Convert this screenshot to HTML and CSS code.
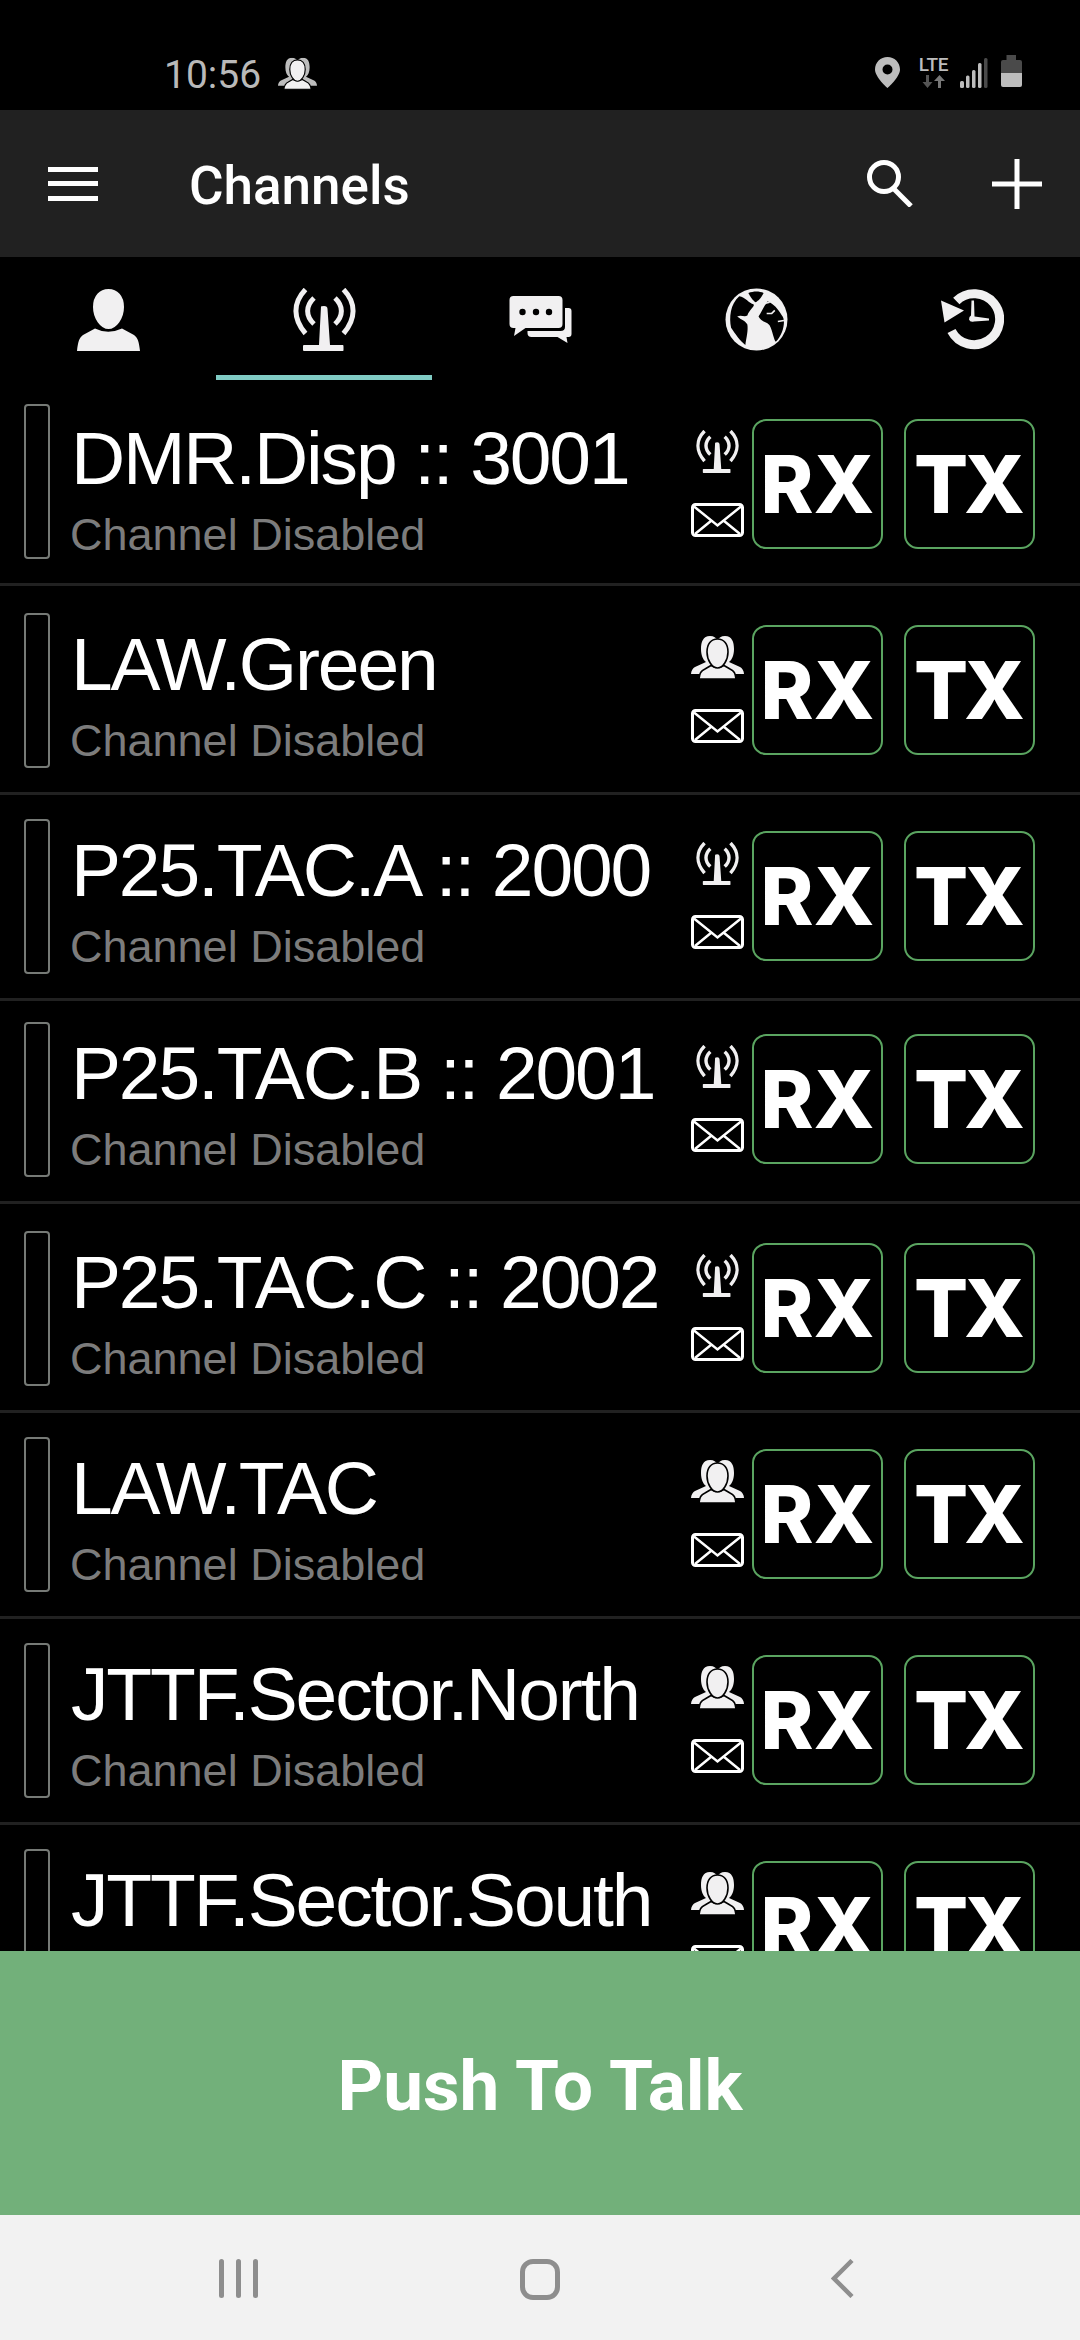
FILE: index.html
```html
<!DOCTYPE html>
<html lang="en">
<head>
<meta charset="utf-8">
<title>Channels</title>
<link rel="stylesheet" href="styles.css">
</head>
<body>
<svg class="defs" xmlns="http://www.w3.org/2000/svg">
  <symbol id="person" viewBox="0 0 63 63">
    <path d="M0 63C1 54 2 50 6 47L18 40.5Q31 47 45 40.5L57 47C61 50 62 54 63 63Z"/>
    <path class="cut" d="M31.5 0C22 0 15 7 15 19C15 31 23 42 31.5 42C40 42 48 31 48 19C48 7 41 0 31.5 0Z"/>
  </symbol>
  <symbol id="antenna" viewBox="0 0 63 63" preserveAspectRatio="none">
    <path d="M28 18.5Q28 18 31 18Q34.500 18 34.500 21L37 57H50Q50.500 57 50.500 59V62Q50.500 63 50 63H11Q10 63 10 62V58Q10 57 11 57H26Z"/>
    <g class="wave">
      <path d="M12.500 1.500C-0.500 15 0 31 12.500 45.500"/>
      <path d="M50.500 1.500C63.500 15 63 31 50.500 45.500"/>
      <path d="M21 10C12.500 18 12.500 28 21 36"/>
      <path d="M42 10C50.500 18 50.500 28 42 36"/>
    </g>
  </symbol>
  <symbol id="group" viewBox="0 0 53 43">
    <path d="M19 0C12 0 10 6 10 13C10 19 12 24 15 26L4 31C2 32 0 35 0 38H12L26 30L40 38H53C53 35 51 32 49 31L38 26C41 24 43 19 43 13C43 6 41 0 34 0C30 0 28 2 26.500 4C25 2 23 0 19 0Z"/>
    <path class="cut-thin" d="M8 43C8.500 37 10 35 14 33L20 29.500Q26.500 33 33 29.500L39 33C43 35 44.500 37 45 43Z"/>
    <path class="cut-thin" d="M26.500 3C20 3 16 8 16 16C16 24 21 32 26.500 32C32 32 37 24 37 16C37 8 33 3 26.500 3Z"/>
  </symbol>
  <symbol id="mail" viewBox="0 0 53 34" preserveAspectRatio="none">
    <rect class="mail-box" x="1.500" y="1.500" width="50" height="31" rx="3"/>
    <path class="mail-line" d="M3 3.500L26.500 22.500L50 3.500M4 31L20.500 17.500M49 31L32.500 17.500"/>
  </symbol>
</svg>

<div class="screen">
  <div class="status">
    <span class="time">10:56</span>
    <svg class="st-group" viewBox="0 0 53 43"><use href="#group"/></svg>
    <div class="st-right">
      <svg class="pin" viewBox="0 0 25 31"><path fill-rule="evenodd" d="M12.500 0C5.600 0 0 5.500 0 12.400C0 20 12.500 31 12.500 31S25 20 25 12.400C25 5.500 19.400 0 12.500 0ZM12.500 7.500A5 5 0 1 1 12.500 17.500A5 5 0 1 1 12.500 7.500Z"/></svg>
      <div class="lte">
        <span class="lte-text">LTE</span>
        <svg class="lte-arrows" viewBox="0 0 24 13"><path class="dn" d="M4 0H7V7H10.500L5.500 13L0.500 7H4Z"/><path class="up" d="M16 13H19V6H23L17.500 0L12 6H16Z"/></svg>
      </div>
      <svg class="signal" viewBox="0 0 28 30">
        <rect class="lit" x="0" y="23" width="4" height="7" rx="1.500"/>
        <rect class="lit" x="6" y="17.500" width="3.500" height="12.500" rx="1.500"/>
        <rect class="lit" x="12" y="12" width="3.500" height="18" rx="1.500"/>
        <rect class="lit" x="18" y="5" width="3.500" height="25" rx="1.500"/>
        <rect class="dim" x="24" y="0" width="3.500" height="30" rx="1.500"/>
      </svg>
      <svg class="battery" viewBox="0 0 21 32">
        <path class="dim" d="M5.500 0H15V5H19Q21 5 21 7V18H0V7Q0 5 2 5H5.500Z"/>
        <path class="lit" d="M0 18H21V30Q21 32 19 32H2Q0 32 0 30Z"/>
      </svg>
    </div>
  </div>

  <header class="appbar">
    <div class="menu"><i></i><i></i><i></i></div>
    <h1 class="appbar-title">Channels</h1>
    <svg class="search" viewBox="0 0 47 47"><circle cx="17" cy="17" r="14.500"/><path d="M26 28L44 46"/></svg>
    <svg class="plus" viewBox="0 0 50 50"><path d="M25 0V50M0 25H50"/></svg>
  </header>

  <nav class="tabs">
    <div class="tab"><svg class="tab-icon" viewBox="0 0 63 63"><use href="#person"/></svg></div>
    <div class="tab tab-on"><svg class="tab-icon" viewBox="0 0 63 63"><use href="#antenna"/></svg></div>
    <div class="tab"><svg class="tab-icon" viewBox="0 0 62 63"><path d="M4 8H49Q53 8 53 12V36Q53 40 49 40H16L4.500 48L6 40H4Q0 40 0 36V12Q0 8 4 8Z"/><path d="M55.500 20H59Q62 20 62 23V46Q62 49 59 49H57L58 55L48 49H22Q18 49 18 45V43H51Q55.500 43 55.500 39Z"/><g class="dots"><circle cx="13" cy="24" r="3.200"/><circle cx="26.500" cy="24" r="3.200"/><circle cx="39.500" cy="24" r="3.200"/></g></svg></div>
    <div class="tab"><svg class="tab-icon" viewBox="0 0 62 60"><circle cx="31" cy="30" r="30.500"/><g class="dots"><path d="M14 7C20 8 24 14 28 15C30 17 24 20 22 26C19 28 16 25 12 27C17 31 20 31 22 35C23 41 21 48 20 55C15 51 10 44 6 38C4 28 5 15 14 7Z"/><path d="M23 4C28 2 34 2 38 4C36 8 33 12 30 13C28 12 25 8 23 4Z"/><path d="M42 12C48 15 52 19 56 26C60 30 58 44 50 52C48 50 47 42 44 36C42 32 36 33 33 27C37 21 38 17 42 12Z"/></g><path class="coast" d="M41 24L46 24L49 21M36 16L40 14L44 13M52 32L58 31"/></svg></div>
    <div class="tab"><svg class="tab-icon" viewBox="0 0 63 60"><path class="clock-ring" d="M15.300 11.500A25.500 25.500 0 1 1 10.500 41.500"/><path d="M0 11L3.500 33L23 21Z"/><path d="M30.500 11H33L33.500 27L48 29V31L33 32Q29 33 28 30Q28 27 30 26Z"/></svg></div>
    <div class="tab-line"></div>
  </nav>

  <main class="list">
    <div class="row first">
      <div class="bar"></div>
      <div class="info"><div class="name">DMR.Disp :: 3001</div><div class="sub">Channel Disabled</div></div>
      <div class="actions">
        <div class="stack"><svg class="kind" viewBox="0 0 63 63"><use href="#antenna"/></svg><svg class="mail" viewBox="0 0 53 34"><use href="#mail"/></svg></div>
        <div class="toggle">RX</div><div class="toggle">TX</div>
      </div>
    </div>
    <div class="row tall">
      <div class="bar"></div>
      <div class="info"><div class="name">LAW.Green</div><div class="sub">Channel Disabled</div></div>
      <div class="actions">
        <div class="stack"><svg class="kind" viewBox="0 0 53 43"><use href="#group"/></svg><svg class="mail" viewBox="0 0 53 34"><use href="#mail"/></svg></div>
        <div class="toggle">RX</div><div class="toggle">TX</div>
      </div>
    </div>
    <div class="row">
      <div class="bar"></div>
      <div class="info"><div class="name">P25.TAC.A :: 2000</div><div class="sub">Channel Disabled</div></div>
      <div class="actions">
        <div class="stack"><svg class="kind" viewBox="0 0 63 63"><use href="#antenna"/></svg><svg class="mail" viewBox="0 0 53 34"><use href="#mail"/></svg></div>
        <div class="toggle">RX</div><div class="toggle">TX</div>
      </div>
    </div>
    <div class="row short">
      <div class="bar"></div>
      <div class="info"><div class="name">P25.TAC.B :: 2001</div><div class="sub">Channel Disabled</div></div>
      <div class="actions">
        <div class="stack"><svg class="kind" viewBox="0 0 63 63"><use href="#antenna"/></svg><svg class="mail" viewBox="0 0 53 34"><use href="#mail"/></svg></div>
        <div class="toggle">RX</div><div class="toggle">TX</div>
      </div>
    </div>
    <div class="row tall">
      <div class="bar"></div>
      <div class="info"><div class="name">P25.TAC.C :: 2002</div><div class="sub">Channel Disabled</div></div>
      <div class="actions">
        <div class="stack"><svg class="kind" viewBox="0 0 63 63"><use href="#antenna"/></svg><svg class="mail" viewBox="0 0 53 34"><use href="#mail"/></svg></div>
        <div class="toggle">RX</div><div class="toggle">TX</div>
      </div>
    </div>
    <div class="row">
      <div class="bar"></div>
      <div class="info"><div class="name">LAW.TAC</div><div class="sub">Channel Disabled</div></div>
      <div class="actions">
        <div class="stack"><svg class="kind" viewBox="0 0 53 43"><use href="#group"/></svg><svg class="mail" viewBox="0 0 53 34"><use href="#mail"/></svg></div>
        <div class="toggle">RX</div><div class="toggle">TX</div>
      </div>
    </div>
    <div class="row">
      <div class="bar"></div>
      <div class="info"><div class="name">JTTF.Sector.North</div><div class="sub">Channel Disabled</div></div>
      <div class="actions">
        <div class="stack"><svg class="kind" viewBox="0 0 53 43"><use href="#group"/></svg><svg class="mail" viewBox="0 0 53 34"><use href="#mail"/></svg></div>
        <div class="toggle">RX</div><div class="toggle">TX</div>
      </div>
    </div>
    <div class="row">
      <div class="bar"></div>
      <div class="info"><div class="name">JTTF.Sector.South</div><div class="sub">Channel Disabled</div></div>
      <div class="actions">
        <div class="stack"><svg class="kind" viewBox="0 0 53 43"><use href="#group"/></svg><svg class="mail" viewBox="0 0 53 34"><use href="#mail"/></svg></div>
        <div class="toggle">RX</div><div class="toggle">TX</div>
      </div>
    </div>
  </main>

  <div class="ptt">Push To Talk</div>

  <div class="navbar">
    <div class="recents"><i></i><i></i><i></i></div>
    <div class="home"></div>
    <svg class="back" viewBox="0 0 23 39"><path d="M21 1.500L3 19.500L21 37.500"/></svg>
  </div>
</div>
</body>
</html>
```

FILE: styles.css
```css
* { box-sizing: border-box; }
html, body { margin: 0; padding: 0; background: #000; }
.defs { display: none; }

.screen {
  width: 1080px;
  height: 2340px;
  display: flex;
  flex-direction: column;
  background: #000;
  overflow: hidden;
  font-family: "Liberation Sans", Arial, sans-serif;
}

/* status bar */
.status {
  flex: 0 0 110px;
  display: flex;
  align-items: flex-start;
  padding: 55px 58px 0 164px;
  fill: #bdbdbd;
}
.time {
  font: 400 39px/40px Roboto, sans-serif;
  color: #b9b9b9;
  width: 92px;
}
.st-group { width: 39px; height: 33px; margin: 2px 0 0 22px; }
.st-group .cut-thin { stroke: #000; }
.st-right { margin-left: auto; display: flex; align-items: flex-start; }
.pin { width: 25px; height: 31px; margin-top: 2px; }
.lte { width: 31px; margin-left: 18px; margin-top: 1px; display: flex; flex-direction: column; align-items: center; }
.lte-text { font: 500 19px/17px Roboto, sans-serif; color: #bdbdbd; letter-spacing: -0.3px; }
.lte-arrows { width: 24px; height: 13px; margin-top: 2px; }
.dn { fill: #555; }
.up { fill: #777; }
.signal { width: 28px; height: 30px; margin: 3px 0 0 11px; }
.battery { width: 21px; height: 32px; margin: 0 0 0 13px; }
.lit { fill: #bdbdbd; }
.dim { fill: #4a4a4a; }

/* app bar */
.appbar {
  flex: 0 0 147px;
  background: #212121;
  display: flex;
  align-items: center;
  padding-left: 48px;
}
.menu { width: 50px; display: flex; flex-direction: column; gap: 9.500px; }
.menu i { display: block; height: 5px; background: #fff; }
.appbar-title {
  margin: 5px 0 0 91px;
  font: 500 53px/60px Roboto, sans-serif;
  color: #fff;
  flex: 1;
}
.search { width: 47px; height: 47px; fill: none; stroke: #fff; stroke-width: 5; margin-right: 78px; }
.plus { width: 50px; height: 50px; fill: none; stroke: #fff; stroke-width: 5; margin-right: 38px; }

/* tabs */
.tabs {
  flex: 0 0 123px;
  display: grid;
  grid-template-columns: repeat(5, 216px);
  grid-template-rows: 118px 5px;
  fill: #f1f0f1;
}
.tab { display: flex; justify-content: center; padding-top: 31px; }
.tab-icon { width: 63px; height: 63px; }
.tab-line { grid-row: 2; grid-column: 2; background: #80cbc4; }
.cut { stroke: #000; stroke-width: 2; fill: #f1f0f1; }
.cut-thin { stroke: #000; stroke-width: 1.600; fill: #f1f0f1; }
.wave path { fill: none; stroke: #f1f0f1; stroke-width: 5; }
.dots { fill: #000; }
.coast { fill: none; stroke: #f1f0f1; stroke-width: 1.500; }
.clock-ring { fill: none; stroke: #f1f0f1; stroke-width: 9; }

/* list */
.list { flex: 1 1 0; min-height: 0; overflow: hidden; }
.row {
  display: flex;
  align-items: flex-start;
  padding: 24px 0 24px 24px;
  border-bottom: 3px solid #212121;
  fill: #f1f0f1;
}
.row.tall { padding-top: 27px; }
.row.short { padding-top: 21px; }
.bar {
  flex: 0 0 26px;
  height: 155px;
  border: 2px solid #767a76;
  border-radius: 4px;
}
.info { flex: 1; min-width: 0; height: 155px; margin-left: 20px; padding-top: 11px; white-space: nowrap; }
.name { font-size: 75px; line-height: 80px; letter-spacing: -2.150px; margin-left: 1px; color: #fff; }
.sub { font-size: 45px; line-height: 56px; color: #7c7c7c; margin-top: 9px; }
.first .info { padding-top: 14px; }
.actions { display: flex; align-items: flex-start; margin-top: 12px; padding-right: 45px; }
.first .actions { margin-top: 15px; }
.stack { width: 53px; margin-right: 8px; padding-top: 11px; display: flex; flex-direction: column; align-items: center; }
.kind { width: 53px; height: 43px; }
.mail { width: 53px; height: 34px; margin-top: 30px; }
.mail-box { fill: none; stroke: #fff; stroke-width: 3; }
.mail-line { fill: none; stroke: #fff; stroke-width: 2.500; }
.toggle {
  width: 131px;
  height: 130px;
  border: 2.500px solid #5aa460;
  border-radius: 14px;
  display: flex;
  align-items: center;
  justify-content: center;
  font: 800 80px/1 Inter, sans-serif;
  color: #fff;
}
.toggle + .toggle { margin-left: 21px; letter-spacing: -4px; padding-right: 4px; }

/* push to talk */
.ptt {
  flex: 0 0 264px;
  background: #72b07a;
  color: #fff;
  display: flex;
  align-items: center;
  justify-content: center;
  padding-top: 5px;
  font: 700 71px/1 Roboto, sans-serif;
}

/* nav bar */
.navbar {
  flex: 0 0 125px;
  background: #f2f2f2;
  display: flex;
  align-items: flex-start;
  padding: 44px 0 0 219px;
}
.recents { width: 39px; height: 39px; display: flex; justify-content: space-between; }
.recents i { display: block; width: 5px; background: #8e8e8e; border-radius: 2.500px; }
.home { width: 40px; height: 41px; margin-left: 262px; border: 5px solid #8e8e8e; border-radius: 13px; }
.back { width: 23px; height: 39px; margin-left: 271px; fill: none; stroke: #8e8e8e; stroke-width: 4.500; }
```
